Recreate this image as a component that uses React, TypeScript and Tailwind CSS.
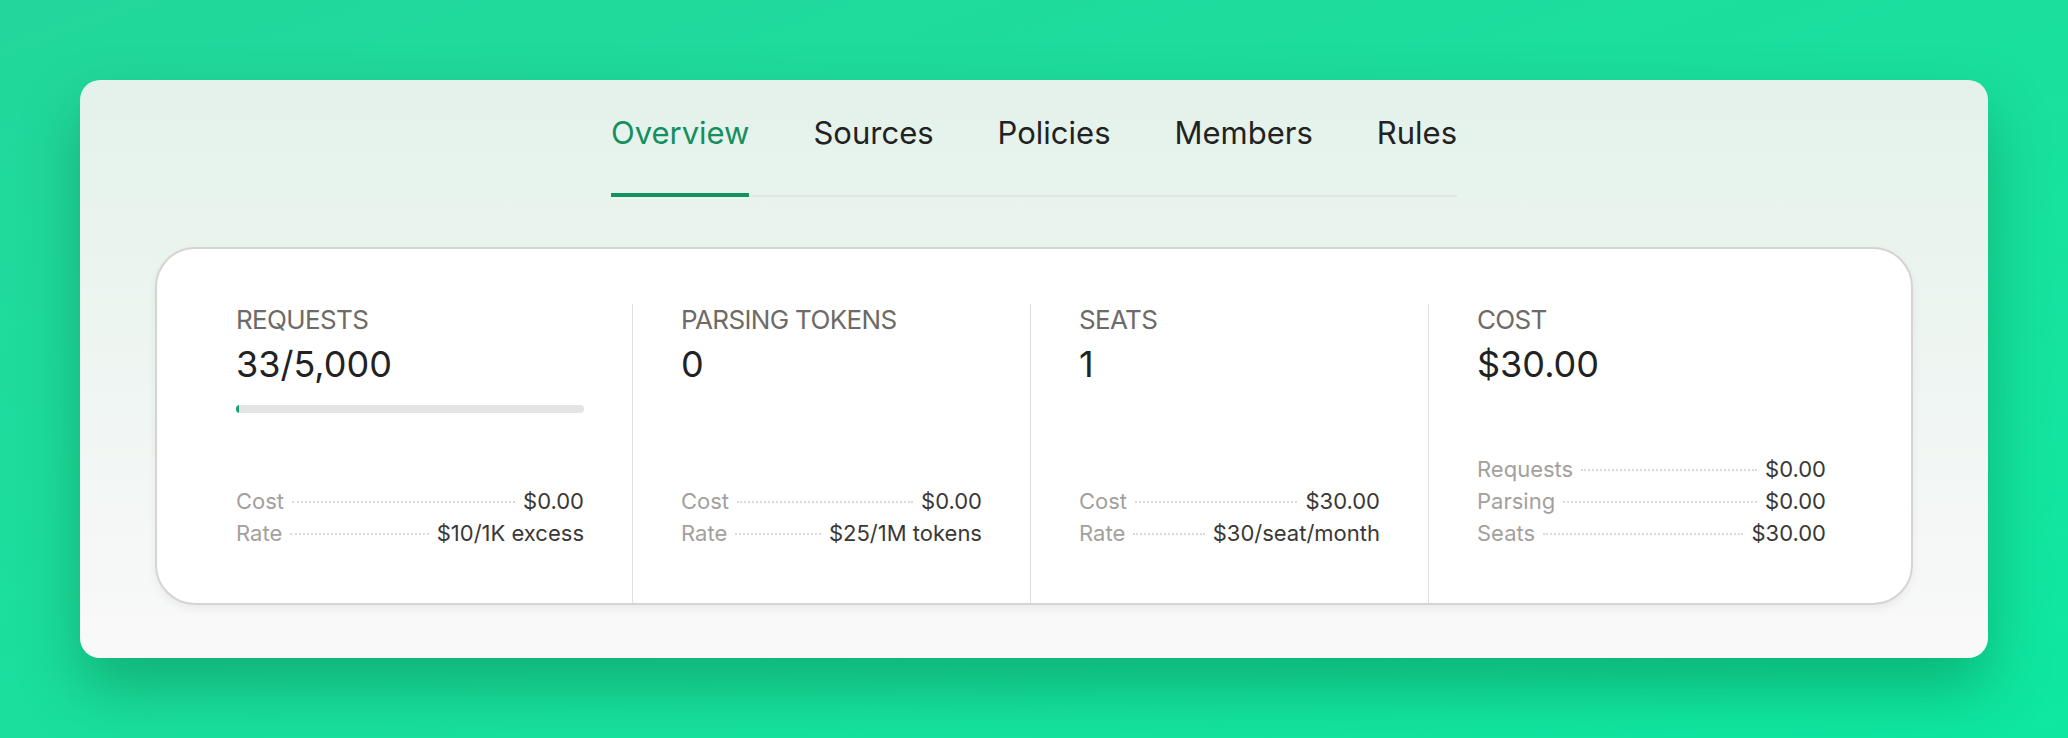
const font = { fontFamily: "Inter, 'Liberation Sans', sans-serif" };

function Row({ k, v }: { k: string; v: string }) {
  return (
    <div className="flex items-baseline gap-2 text-[22px] leading-[32px]">
      <span className="text-[#a3a09d]">{k}</span>
      <span className="flex-1 border-b-2 border-dotted border-[#dcdad8] translate-y-[-6px]" />
      <span className="text-[#3a3836]">{v}</span>
    </div>
  );
}

function Stat({ label, value, rows, bar, w, first }: { label: string; value: string; rows: [string, string][]; bar?: boolean; w: string; first?: boolean }) {
  return (
    <div className={`${first ? "" : "border-l border-[#e2e0de] pl-12"} pr-12`}>
      <div className={`${w} flex flex-col h-[245px]`}>
        <div className="text-[26px] leading-[32px] text-[#6d6a67] tracking-tight">{label}</div>
        <div className="text-[36px] leading-[44px] text-[#222] mt-[6px]">{value}</div>
        {bar && (
          <div className="mt-[19px] h-[8px] rounded-full bg-[#e4e4e4] overflow-hidden">
            <div className="h-full w-[3px] bg-[#16a06c]" />
          </div>
        )}
        <div className="mt-auto">
          {rows.map(([k, v]) => (
            <Row key={k} k={k} v={v} />
          ))}
        </div>
      </div>
    </div>
  );
}

export default function App() {
  const tabs = ["Overview", "Sources", "Policies", "Members", "Rules"];
  return (
    <div style={font} className="w-[2068px] h-[738px] bg-gradient-to-br from-[#22d79b] to-[#0de8a0] pt-[80px] px-[80px]">
      <div className="h-[578px] rounded-[20px] bg-gradient-to-b from-[#e4f2eb] to-[#f9f9f9] shadow-[0_30px_60px_rgba(0,90,50,0.35)] pt-[118px] px-[75px]">
        <div className="flex justify-center -mt-[118px] pt-[117px]">
          <div className="flex gap-[64px] border-b-2 border-[#e2e6e4] -mt-[92px]">
            {tabs.map((t, i) => (
              <div key={t} className={`text-[31px] leading-[40px] pt-[8px] pb-[32px] -mb-[2px] ${i === 0 ? "text-[#168f5f] border-b-4 border-[#12935f]" : "text-[#222] border-b-4 border-transparent"}`}>
                {t}
              </div>
            ))}
          </div>
        </div>
        <div className="mt-[50px] h-[358px] rounded-[40px] bg-white border-2 border-[#d6d4d2] shadow-[0_4px_10px_rgba(0,0,0,0.06)] px-[79px] pt-[55px] flex">
          <Stat first w="w-[348px]" label="REQUESTS" value="33/5,000" bar rows={[["Cost", "$0.00"], ["Rate", "$10/1K excess"]]} />
          <Stat w="w-[301px]" label="PARSING TOKENS" value="0" rows={[["Cost", "$0.00"], ["Rate", "$25/1M tokens"]]} />
          <Stat w="w-[301px]" label="SEATS" value="1" rows={[["Cost", "$30.00"], ["Rate", "$30/seat/month"]]} />
          <Stat w="w-[349px]" label="COST" value="$30.00" rows={[["Requests", "$0.00"], ["Parsing", "$0.00"], ["Seats", "$30.00"]]} />
        </div>
      </div>
    </div>
  );
}
